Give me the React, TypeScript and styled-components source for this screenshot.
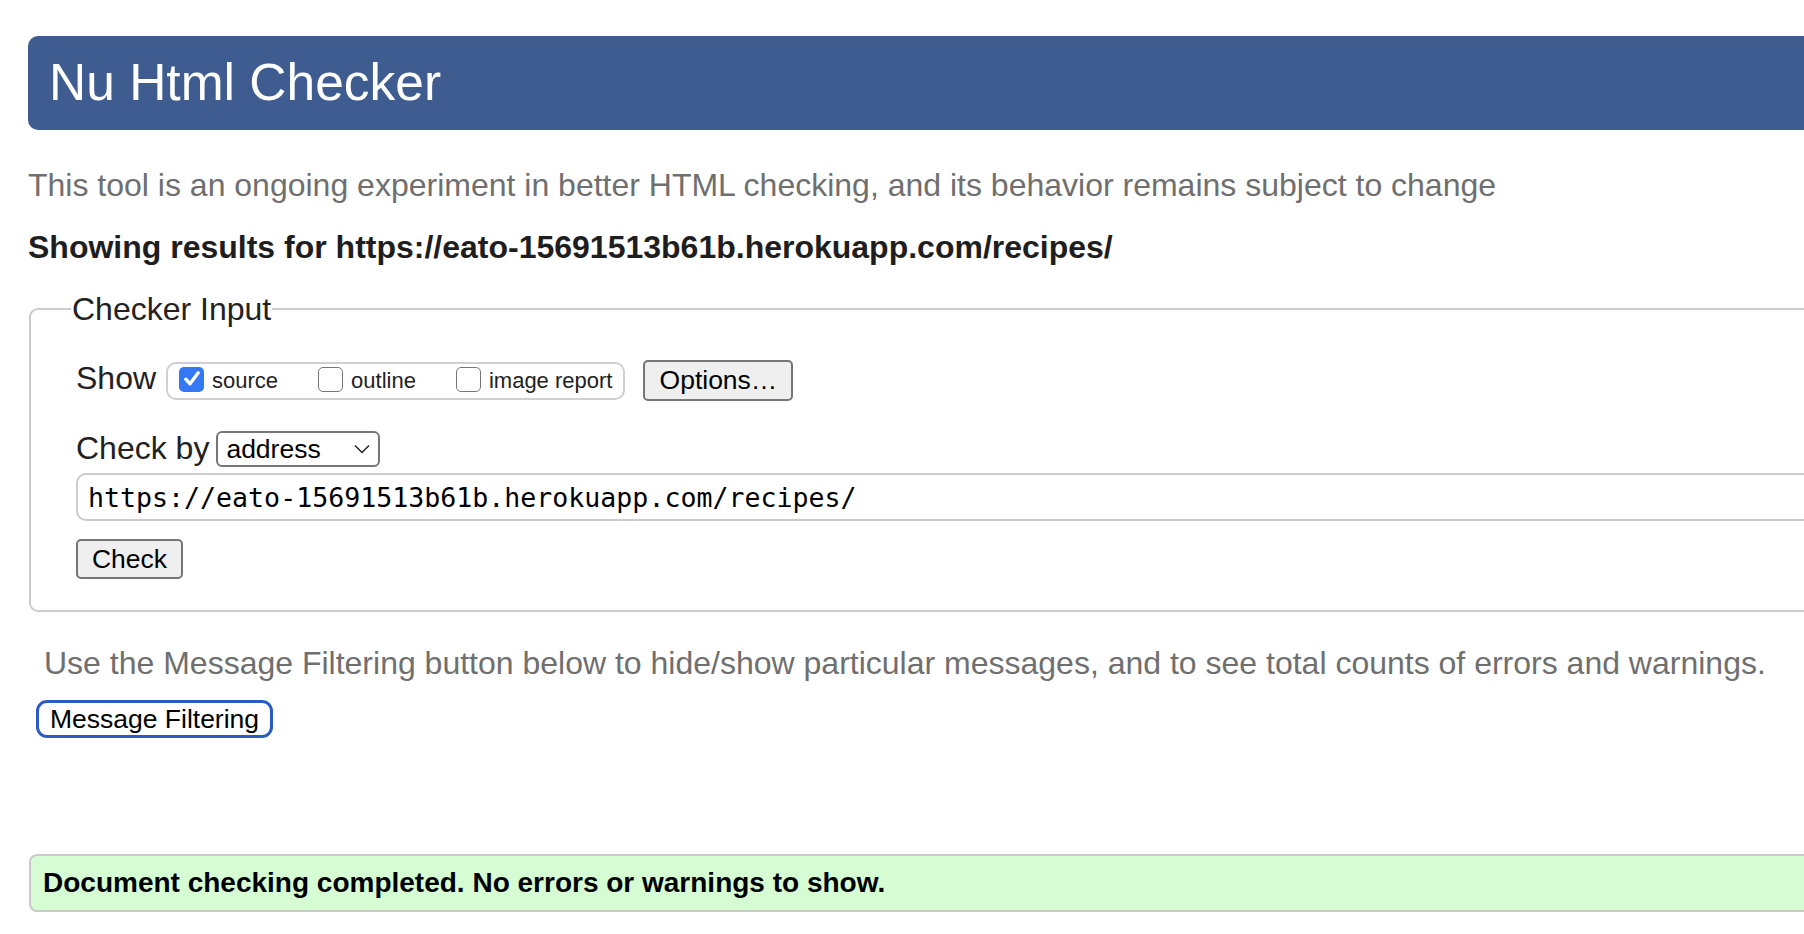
import React from "react";
import styled, { createGlobalStyle } from "styled-components";

const GlobalStyle = createGlobalStyle`
  html, body {
    margin: 0;
    padding: 0;
    background: #ffffff;
    overflow: hidden;
  }
  body {
    font-family: "Liberation Sans", Arial, Helvetica, sans-serif;
  }
`;

const Page = styled.main`
  width: 1990px;
  padding-left: 28px;
  box-sizing: border-box;
`;

const Header = styled.header`
  margin-top: 36px;
  height: 94px;
  background: #3e5c8f;
  border-radius: 10px;
  display: flex;
  align-items: center;
  padding-left: 21px;
`;

const Title = styled.h1`
  margin: 0;
  font-size: 51.5px;
  font-weight: 400;
  line-height: 1;
  color: #ffffff;
`;

const Intro = styled.p`
  margin: 35px 0 0 0;
  font-size: 32px;
  line-height: 40px;
  color: #6f6f6f;
`;

const Showing = styled.p`
  margin: 22px 0 0 0;
  font-size: 32px;
  line-height: 40px;
  font-weight: 700;
  color: #1e1e20;
`;

const Fieldset = styled.fieldset`
  margin: 22px 0 0 1px;
  border: 2px solid #cbcbcb;
  border-radius: 9px;
  padding: 31px 0 31px 45px;
  min-width: 0;
`;

const Legend = styled.legend`
  font-size: 32px;
  line-height: 40px;
  color: #222222;
  padding: 0 1px;
  margin-left: -5px;
`;

const Row = styled.div<{ $top?: number; $height: number }>`
  display: flex;
  align-items: center;
  height: ${(p) => p.$height}px;
  margin-top: ${(p) => p.$top ?? 0}px;
`;

const Label = styled.span<{ $gap: number; $lift: number }>`
  font-size: 32px;
  line-height: 40px;
  color: #222222;
  margin-right: ${(p) => p.$gap}px;
  margin-bottom: ${(p) => p.$lift}px;
`;

const CheckGroup = styled.div`
  display: flex;
  align-items: center;
  height: 38px;
  box-sizing: border-box;
  border: 2px solid #d0d0d0;
  border-radius: 10px;
  padding: 0 11px 0 11px;
`;

const CheckItem = styled.label`
  display: flex;
  align-items: center;
  gap: 8px;
  font-size: 22px;
  line-height: 25px;
  color: #222222;
  & + & {
    margin-left: 40px;
  }
`;

const Box = styled.span<{ $checked?: boolean }>`
  width: 25px;
  height: 25px;
  box-sizing: border-box;
  border-radius: 5px;
  display: flex;
  align-items: center;
  justify-content: center;
  background: ${(p) => (p.$checked ? "#3478f6" : "#ffffff")};
  border: ${(p) => (p.$checked ? "none" : "1.5px solid #767676")};
  margin-top: -3px;
`;

const Button = styled.button<{ $w: number; $h: number }>`
  width: ${(p) => p.$w}px;
  height: ${(p) => p.$h}px;
  box-sizing: border-box;
  border: 2px solid #767676;
  border-radius: 5px;
  background: #efefef;
  font-family: "Liberation Sans", Arial, sans-serif;
  font-size: 26.5px;
  color: #000000;
  padding: 0;
  display: flex;
  align-items: center;
  justify-content: center;
`;

const OptionsButton = styled(Button)`
  margin-left: 18px;
`;

const CheckButton = styled(Button)`
  margin-top: 18px;
`;

const Select = styled.div`
  width: 164px;
  height: 36px;
  box-sizing: border-box;
  border: 2px solid #767676;
  border-radius: 6px;
  display: flex;
  align-items: center;
  justify-content: space-between;
  padding: 0 8px 0 8px;
  font-size: 26.5px;
  color: #000000;
`;

const UrlInput = styled.input`
  display: block;
  margin-top: 6px;
  width: 1900px;
  height: 48px;
  box-sizing: border-box;
  border: 2px solid #cccccc;
  border-radius: 10px;
  padding: 0 0 0 10px;
  font-family: "DejaVu Sans Mono", "Liberation Mono", monospace;
  font-size: 26.6px;
  color: #000000;
  background: #ffffff;
  outline: none;
`;

const UseText = styled.p`
  margin: 31px 0 0 16px;
  font-size: 32px;
  line-height: 40px;
  color: #6f6f6f;
`;

const FilterButton = styled.button`
  display: block;
  margin: 17px 0 0 8px;
  width: 237px;
  height: 38px;
  box-sizing: border-box;
  border: 3px solid #2b5cc6;
  border-radius: 11px;
  background: #ffffff;
  font-family: "Liberation Sans", Arial, sans-serif;
  font-size: 26.5px;
  color: #000000;
  padding: 0;
`;

const Success = styled.div`
  margin: 116px 0 0 1px;
  border: 2px solid #cacaca;
  border-radius: 8px;
  background: #d6fcd3;
  height: 58px;
  box-sizing: border-box;
  line-height: 54px;
  padding-left: 12px;
  font-size: 28px;
  font-weight: 700;
  color: #000000;
`;

const CheckMark = () => (
  <svg width="20" height="20" viewBox="0 0 20 20" aria-hidden>
    <path
      d="M3.8 10.2 L8 14.8 L16.2 3.8"
      fill="none"
      stroke="#ffffff"
      strokeWidth="3.4"
      strokeLinecap="round"
      strokeLinejoin="round"
    />
  </svg>
);

const Chevron = () => (
  <svg width="16" height="10" viewBox="0 0 16 10" aria-hidden>
    <path d="M1 1.5 L8 8.5 L15 1.5" fill="none" stroke="#222" strokeWidth="1.5" />
  </svg>
);

const url = "https://eato-15691513b61b.herokuapp.com/recipes/";

export default function App() {
  return (
    <>
      <GlobalStyle />
      <Page>
        <Header>
          <Title>Nu Html Checker</Title>
        </Header>
        <Intro>
          This tool is an ongoing experiment in better HTML checking, and its behavior remains subject to change
        </Intro>
        <Showing>Showing results for {url}</Showing>
        <Fieldset>
          <Legend>Checker Input</Legend>
          <Row $height={41}>
            <Label $gap={10} $lift={5}>Show</Label>
            <CheckGroup>
              <CheckItem>
                <Box $checked>
                  <CheckMark />
                </Box>
                source
              </CheckItem>
              <CheckItem>
                <Box />
                outline
              </CheckItem>
              <CheckItem>
                <Box />
                image report
              </CheckItem>
            </CheckGroup>
            <OptionsButton $w={150} $h={41}>Options…</OptionsButton>
          </Row>
          <Row $top={30} $height={36}>
            <Label $gap={7} $lift={3}>Check by</Label>
            <Select>
              <span>address</span>
              <Chevron />
            </Select>
          </Row>
          <UrlInput readOnly value={url} />
          <CheckButton $w={107} $h={40}>Check</CheckButton>
        </Fieldset>
        <UseText>
          Use the Message Filtering button below to hide/show particular messages, and to see total counts of errors and warnings.
        </UseText>
        <FilterButton>Message Filtering</FilterButton>
        <Success>Document checking completed. No errors or warnings to show.</Success>
      </Page>
    </>
  );
}
